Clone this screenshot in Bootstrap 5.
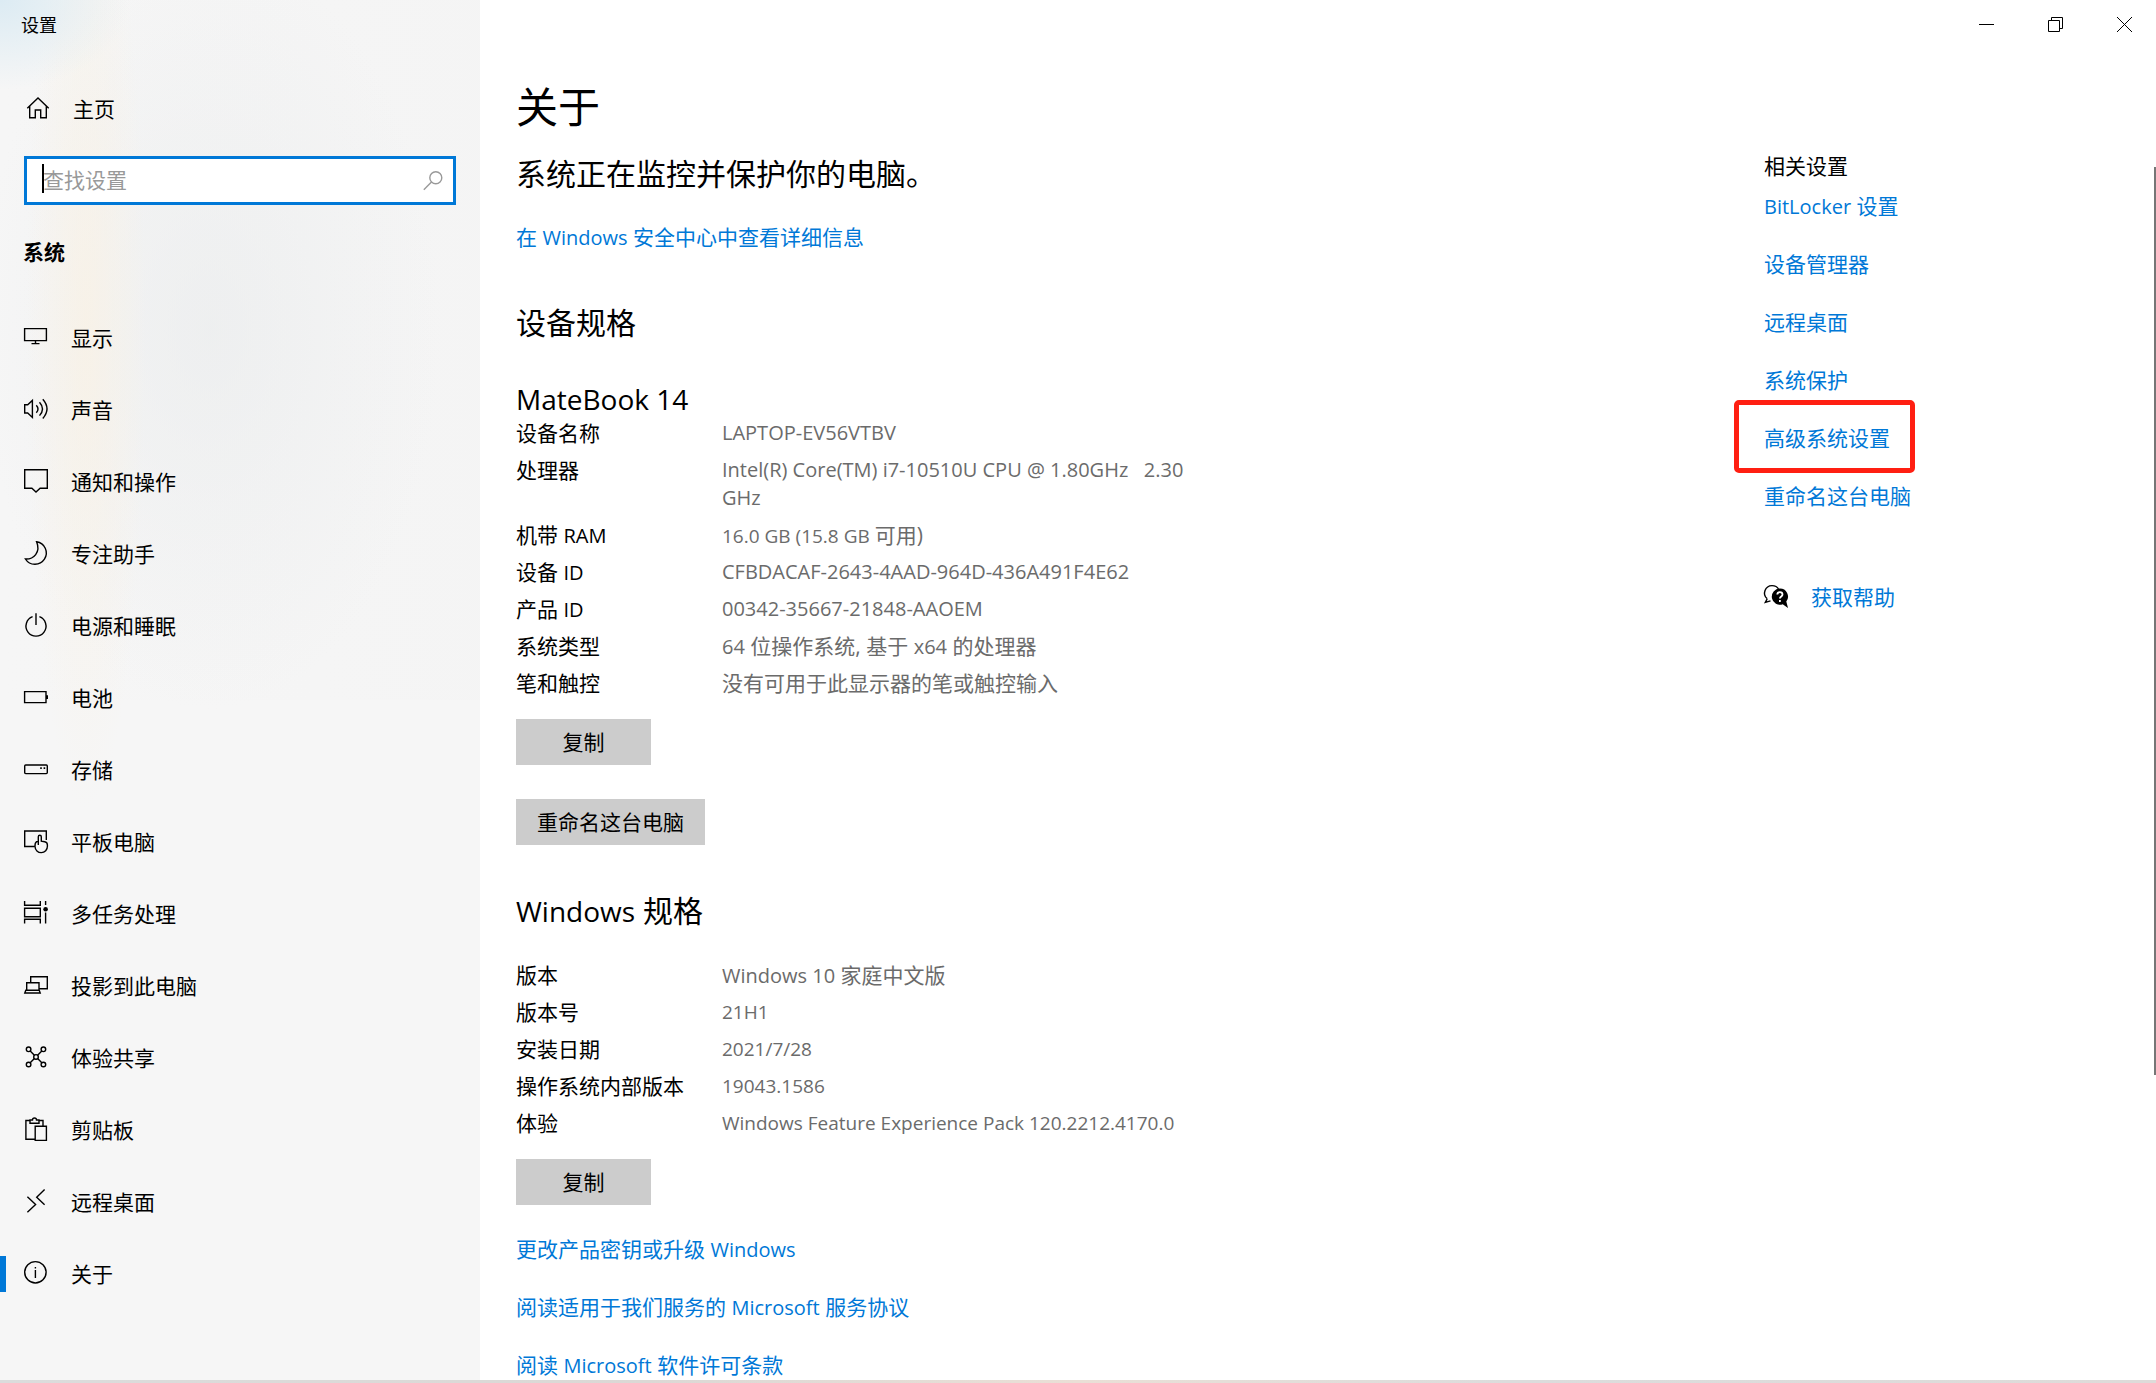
<!DOCTYPE html>
<html lang="zh-CN">
<head>
<meta charset="utf-8">
<meta name="viewport" content="width=device-width, initial-scale=1">
<title>设置</title>
<link href="https://cdn.jsdelivr.net/npm/bootstrap@5.3.0/dist/css/bootstrap.min.css" rel="stylesheet">
<style>
  body { font: 21px/28px "Open Sans", "Noto Sans CJK SC", sans-serif; color: #000; background: #fff; }
  a { color: #0078d7; text-decoration: none; }
  a:hover { text-decoration: underline; }
  svg { display: block; overflow: visible; fill: none; stroke: currentColor; stroke-width: 1.4; }
  .latin { font-size: 20px; }
  .figures { font-size: 19px; }
  span.latin, span.figures { line-height: 1; }
  .filled { fill: currentColor; stroke: none; }

  .sidebar {
    width: 480px;
    background:
      radial-gradient(ellipse 130px 90px at 0 0, #dcebf3, #dcebf300),
      radial-gradient(ellipse 60px 480px at 86px 330px, #f9f1e4c0, #f9f1e400),
      radial-gradient(ellipse 230px 380px at 210px 330px, #e9ebeca0, #e9ebec00),
      linear-gradient(90deg, #f8f8f800, #f3f3f380) 0 0 / 100% 700px no-repeat;
    background-color: #f6f6f6;
  }
  .app-title { height: 50px; padding-left: 21px; font-size: 18px; }
  .home-link { height: 48px; margin-top: 35px; padding-left: 26px; gap: 23px; color: #000; }
  .search-box { margin: 23px 24px 0; }
  .search-box .form-control {
    height: 49px; padding: 0 48px 2px 16px; border: 3px solid #0078d7; border-radius: 0;
    font-size: 21px; line-height: 28px; background: #fff; box-shadow: none;
  }
  .search-box .form-control::placeholder { color: #999; opacity: 1; }
  .caret { left: 18px; top: 8px; width: 2px; height: 29px; background: #000; }
  .search-btn { right: 13px; top: 15px; color: #999; }
  .group-name { margin: 33px 0 36px 23px; font-size: 21px; line-height: 28px; font-weight: 700; }
  .side-nav .nav-link { height: 72px; padding: 0 24px; gap: 23px; color: #000; }
  .side-nav .nav-link.active::before { content: ""; position: absolute; left: 0; top: 18px; width: 6px; height: 36px; background: #0078d7; }

  .window-bar { height: 49px; gap: 6px; }
  .window-bar .btn { width: 63px; height: 49px; border-radius: 0; color: #000; }
  .window-bar svg { stroke-width: 1; }
  .content { padding: 30px 24px 0 36px; }
  h1 { font-size: 42px; line-height: 56px; font-weight: 400; margin: 0; }
  h2, h3 { font-size: 30px; line-height: 40px; font-weight: 400; margin: 0; }
  h3 { font-size: 28px; }
  .status-line { margin-top: 19px; }
  .status-link { margin-top: 29px; }
  .device-head { margin-top: 52px; }
  .device-name { margin-top: 36px; }
  .windows-head { margin: 46px 0 30px; }
  .windows-head .latin { font-size: 28px; }
  .spec-list { display: grid; grid-template-columns: 206px minmax(0, 476px); row-gap: 9px; margin: 0 0 22px; }
  .spec-list dt { font-weight: 400; }
  .spec-list dd { margin: 0; color: #6b6b6b; white-space: pre-wrap; }
  .win-btn { height: 46px; min-width: 135px; padding: 0 21px; border: 0; border-radius: 0; background: #ccc; color: #000; font-size: 21px; line-height: 28px; }
  .rename-btn { margin-top: 34px; }
  .more-links { margin-top: 30px; gap: 30px; }

  .related { width: 392px; padding-top: 103px; }
  .related-links { margin-top: 12px; gap: 30px; }
  .highlight-frame { left: -30px; top: -24px; width: 181px; height: 73px; border: 5px solid #ff1f12; border-radius: 5px; pointer-events: none; }
  .help-link { margin-top: 73px; gap: 23px; }
  .scroll-thumb { right: 0; top: 167px; width: 2px; height: 908px; background: #767676; }
  .bottom-edge { height: 3px; background: linear-gradient(90deg, #dcdcdc, #dcd8d5 30%, #eadfd6 50%, #dcdcdc 70%, #dedbd9); }
</style>
<script src="https://cdn.jsdelivr.net/npm/bootstrap@5.3.0/dist/js/bootstrap.bundle.min.js"></script>
</head>
<body>
<div class="d-flex flex-column vh-100 overflow-hidden position-relative">
  <div class="d-flex flex-grow-1 overflow-hidden">
    <aside class="sidebar flex-shrink-0">
      <div class="app-title d-flex align-items-center">设置</div>
      <a class="home-link d-flex align-items-center" href="#">
        <svg width="24" height="24" viewBox="0 0 24 24"><path d="M1.3 11.3 12 .9l10.7 10.4M3.7 9.2v11.5h5.6v-7.7h5.4v7.7h5.6V9.2"/></svg>
        主页
      </a>
      <form class="search-box position-relative">
        <input class="form-control" type="text" placeholder="查找设置" aria-label="查找设置">
        <span class="caret position-absolute"></span>
        <button class="search-btn btn p-0 border-0 position-absolute" type="button" aria-label="搜索">
          <svg width="20" height="20" viewBox="0 0 20 20"><circle cx="12.8" cy="6.8" r="6"/><path d="M8.5 11 .8 18.8"/></svg>
        </button>
      </form>
      <h2 class="group-name">系统</h2>
      <nav class="side-nav nav flex-column">
        <a class="nav-link d-flex align-items-center" href="#"><svg width="24" height="24" viewBox="0 2 24 24"><path d="M.6 4.6h21.8v12H.6zM11.5 16.6v3M7.5 19.6h8"/></svg>显示</a>
        <a class="nav-link d-flex align-items-center" href="#"><svg width="24" height="24" viewBox="0 2 24 24"><path d="M.7 8.7h3L8.4 4.4v17L3.7 17h-3zM12.3 9.2q3.4 3.8 0 7.6M15.5 6.2q6 6.7 0 13.4M18.8 3.3q8.4 9.6 0 19.2"/></svg>声音</a>
        <a class="nav-link d-flex align-items-center" href="#"><svg width="24" height="24" viewBox="0 2 24 24"><path d="M.7 1.7h22.6v18.6h-7.2L12 24l-4.1-3.7H.7z"/></svg>通知和操作</a>
        <a class="nav-link d-flex align-items-center" href="#"><svg width="24" height="24" viewBox="0 2 24 24"><path d="M12.6 1.8A11.3 11.3 0 1 1 1.4 19C9.5 19.4 17 12.5 12.6 1.8z"/></svg>专注助手</a>
        <a class="nav-link d-flex align-items-center" href="#"><svg width="24" height="24" viewBox="0 2 24 24"><path d="M8.6 4.7a10 10 0 1 0 6.8 0M12 1.3V13"/></svg>电源和睡眠</a>
        <a class="nav-link d-flex align-items-center" href="#"><svg width="24" height="24" viewBox="0 2 24 24"><path d="M.6 7.6h21.4v11H.6z"/><path class="filled" d="M22 11.3h2v3.6h-2z"/></svg>电池</a>
        <a class="nav-link d-flex align-items-center" href="#"><svg width="24" height="24" viewBox="0 2 24 24"><rect x=".7" y="9" width="22.6" height="8.6" rx="1"/><path class="filled" d="M16.2 11.3h1.6v1.6h-1.6zM19.6 11.3h1.6v1.6h-1.6z"/></svg>存储</a>
        <a class="nav-link d-flex align-items-center" href="#"><svg width="24" height="24" viewBox="0 2 24 24"><path d="M10.3 18.5H.7V3h21.6v9M14.3 17V8.8a1.5 1.5 0 0 1 3 0v4.4l3.4.6c2 .4 2.700 1.300 2.700 3.200v1.300a6.200 6.200 0 0 1-12.400.3c-.1-2 .4-4.200 1.600-5h1.600"/></svg>平板电脑</a>
        <a class="nav-link d-flex align-items-center" href="#"><svg width="24" height="24" viewBox="0 2 24 24"><path d="M.6 1v4.300h15.700V1M.6 8.300h15.700v8.400H.6zM.6 23.500v-4.200h15.700v4.200M21.600 1v4M21.600 12.500v11"/><circle class="filled" cx="21.6" cy="9.3" r="2.3"/></svg>多任务处理</a>
        <a class="nav-link d-flex align-items-center" href="#"><svg width="24" height="24" viewBox="0 2 24 24"><path d="M6.700 10.500V4.700h16.600v12H15.500M2.700 18.300v-7.600h12.300v7.600M1.800 18.300h13.400l1 2.700H.8z"/></svg>投影到此电脑</a>
        <a class="nav-link d-flex align-items-center" href="#"><svg width="24" height="24" viewBox="0 2 24 24"><circle cx="4.6" cy="5.3" r="2.3"/><circle cx="19.4" cy="5.3" r="2.3"/><circle cx="4.6" cy="20.5" r="2.3"/><circle cx="19.4" cy="20.5" r="2.3"/><circle cx="12" cy="12.9" r="2.3"/><path d="m6.200 7 4.200 4.300M17.800 7l-4.200 4.300M6.200 18.800l4.200-4.300M17.800 18.800l-4.200-4.300"/></svg>体验共享</a>
        <a class="nav-link d-flex align-items-center" href="#"><svg width="24" height="24" viewBox="0 2 24 24"><path d="M11 23.200H1.900V4.500H6M15 4.500h4v5.500M6 4v3.200h9V4h-2.500a2 2 0 0 0-4 0zM11.200 10.200h11.200v14.200H11.200z"/></svg>剪贴板</a>
        <a class="nav-link d-flex align-items-center" href="#"><svg width="24" height="24" viewBox="0 2 24 24"><path d="m3.400 8.800 8.200 7.700-8.200 7.800M20.600 1.500l-7.900 7.700 7.900 7.600"/></svg>远程桌面</a>
        <a class="nav-link active d-flex align-items-center position-relative" href="#" aria-current="page"><svg width="24" height="24" viewBox="0 2 24 24"><circle cx="11.4" cy="12.3" r="10.7"/><path d="M11.400 10v8M11.400 7v1.600"/></svg>关于</a>
      </nav>
    </aside>

    <div class="d-flex flex-column flex-grow-1">
      <header class="window-bar d-flex justify-content-end flex-shrink-0">
        <button class="btn p-0 border-0 d-flex align-items-center justify-content-center" type="button" aria-label="最小化"><svg width="15" height="15" viewBox="0 0 15 15"><path d="M0 7.500h15"/></svg></button>
        <button class="btn p-0 border-0 d-flex align-items-center justify-content-center" type="button" aria-label="还原"><svg width="15" height="15" viewBox="0 0 15 15"><path d="M.5 3.500h11v11H.5zM3.500 3.500v-3h11v11h-3"/></svg></button>
        <button class="btn p-0 border-0 d-flex align-items-center justify-content-center" type="button" aria-label="关闭"><svg width="15" height="15" viewBox="0 0 15 15"><path d="m0 0 15 15M15 0 0 15"/></svg></button>
      </header>
      <div class="d-flex flex-grow-1">
        <main class="content flex-grow-1">
          <h1>关于</h1>
          <h2 class="status-line">系统正在监控并保护你的电脑。</h2>
          <a class="status-link d-table" href="#">在 <span class="latin">Windows</span> 安全中心中查看详细信息</a>
          <h2 class="device-head">设备规格</h2>
          <h3 class="device-name">MateBook 14</h3>
          <dl class="spec-list">
            <dt>设备名称</dt><dd class="latin">LAPTOP-EV56VTBV</dd>
            <dt>处理器</dt><dd class="latin">Intel(R) Core(TM) i7-10510U CPU @ 1.80GHz   2.30 GHz</dd>
            <dt>机带 <span class="latin">RAM</span></dt><dd><span class="figures">16.0 GB (15.8 GB </span>可用)</dd>
            <dt>设备 <span class="latin">ID</span></dt><dd class="latin">CFBDACAF-2643-4AAD-964D-436A491F4E62</dd>
            <dt>产品 <span class="latin">ID</span></dt><dd class="latin">00342-35667-21848-AAOEM</dd>
            <dt>系统类型</dt><dd><span class="latin">64</span> 位操作系统, 基于 <span class="latin">x64</span> 的处理器</dd>
            <dt>笔和触控</dt><dd>没有可用于此显示器的笔或触控输入</dd>
          </dl>
          <button class="btn win-btn d-block" type="button">复制</button>
          <button class="btn win-btn rename-btn d-block" type="button">重命名这台电脑</button>
          <h2 class="windows-head"><span class="latin">Windows</span> 规格</h2>
          <dl class="spec-list">
            <dt>版本</dt><dd><span class="latin">Windows 10</span> 家庭中文版</dd>
            <dt>版本号</dt><dd class="figures">21H1</dd>
            <dt>安装日期</dt><dd class="figures">2021/7/28</dd>
            <dt>操作系统内部版本</dt><dd class="figures">19043.1586</dd>
            <dt>体验</dt><dd class="figures">Windows Feature Experience Pack 120.2212.4170.0</dd>
          </dl>
          <button class="btn win-btn d-block" type="button">复制</button>
          <div class="more-links d-flex flex-column align-items-start">
            <a href="#">更改产品密钥或升级 <span class="latin">Windows</span></a>
            <a href="#">阅读适用于我们服务的 <span class="latin">Microsoft</span> 服务协议</a>
            <a href="#">阅读 <span class="latin">Microsoft</span> 软件许可条款</a>
          </div>
        </main>
        <section class="related flex-shrink-0">
          <div>相关设置</div>
          <div class="related-links d-flex flex-column align-items-start">
            <a href="#"><span class="latin">BitLocker</span> 设置</a>
            <a href="#">设备管理器</a>
            <a href="#">远程桌面</a>
            <a href="#">系统保护</a>
            <a class="position-relative" href="#">高级系统设置<span class="highlight-frame position-absolute"></span></a>
            <a href="#">重命名这台电脑</a>
          </div>
          <a class="help-link d-inline-flex align-items-center" href="#">
            <svg class="text-black" width="24" height="24" viewBox="0 1 24 24"><path d="M3.200 14.800A7.500 7.500 0 0 1 8 1.600c3.200 0 5.500 1.500 6.600 3.600M3.200 14.800 1.300 18.400l5.200-1.500"/><path class="filled" d="M15.800 4.600a8 8 0 0 1 6.500 12.900L24 24l-5.300-3.700A8.100 8.100 0 1 1 15.800 4.600z"/><path stroke="#fff" stroke-width="1.8" d="M13.300 10.500c.2-3.300 5.200-3 5.200 0 0 2-2.600 1.900-2.600 4M15.900 16v2"/></svg>
            获取帮助
          </a>
        </section>
      </div>
    </div>
  </div>
  <div class="scroll-thumb position-absolute"></div>
  <div class="bottom-edge flex-shrink-0"></div>
</div>
</body>
</html>
